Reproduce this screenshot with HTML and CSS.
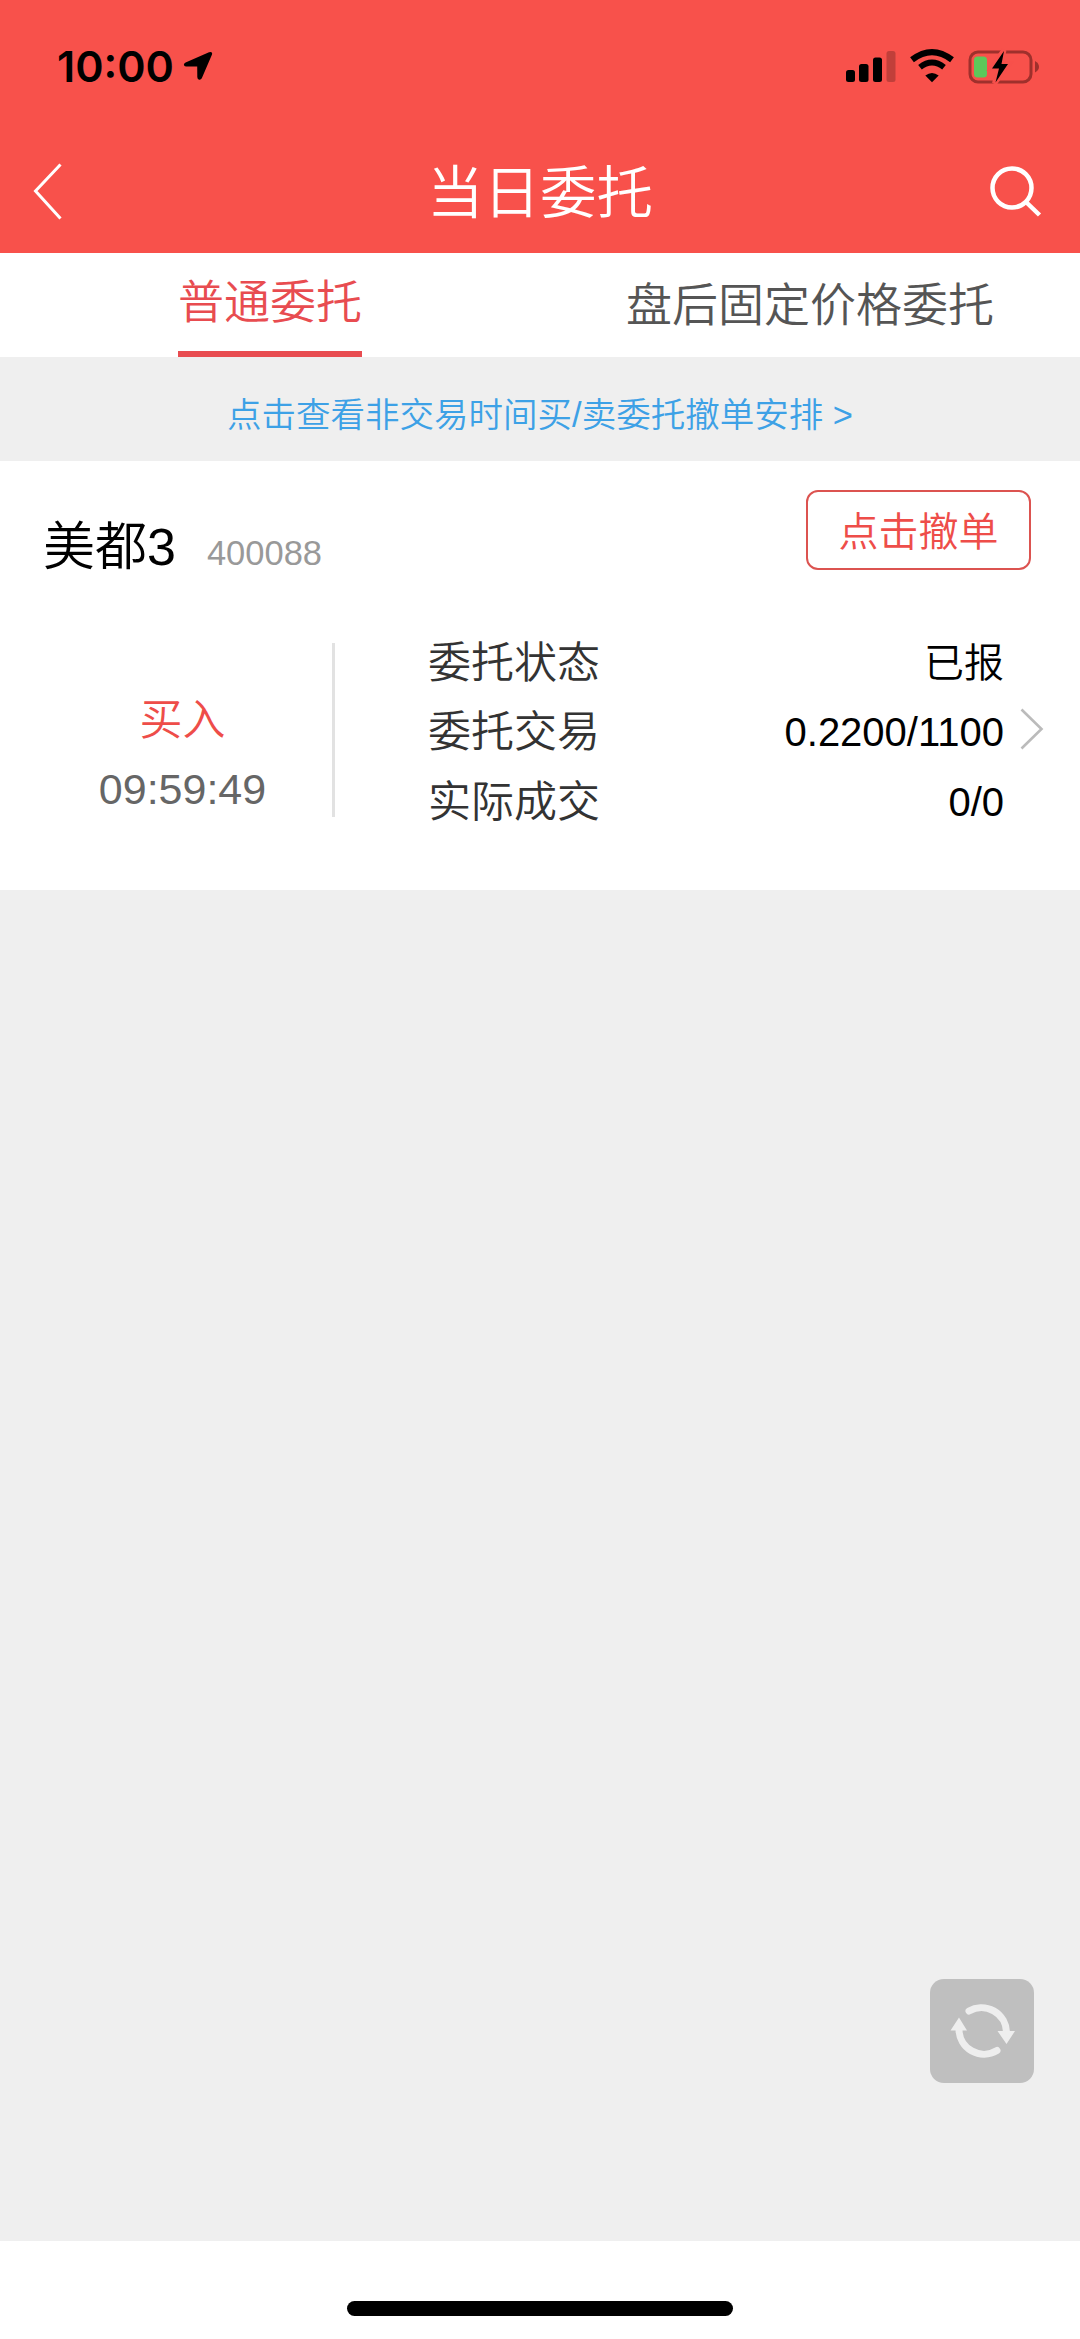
FILE: index.html
```html
<!DOCTYPE html>
<html lang="zh-CN">
<head>
<meta charset="utf-8">
<title>当日委托</title>
<link rel="stylesheet" href="styles.css">
</head>
<body>
<div class="screen">
  <header class="header">
    <div class="status">
      <span class="clock">10:00</span>
      <svg class="location" width="30" height="30" viewBox="0 0 30 30"><path d="M26 1.300 Q29.800 -.2 29 3.600 L18.800 27.300 Q18 29 16 28.700 Q14.300 28.400 14.300 26 L14.200 15.600 L3 15.500 Q1 15.400 .9 13.700 Q.8 12.300 2.600 11.400Z"/></svg>
      <svg class="signals" width="194" height="36" viewBox="0 0 194 36">
        <rect x="0" y="22" width="9" height="12" rx="2.5"/>
        <rect x="13" y="16" width="9.5" height="18" rx="2.5"/>
        <rect x="27" y="9.500" width="9" height="24.500" rx="2.500"/>
        <rect x="40.500" y="3" width="9" height="31" rx="2.500" opacity=".22"/>
        <g fill="none" stroke="#000">
          <path d="M66 11.800 Q86 -3.500 106 11.800" stroke-width="6.200"/>
          <path d="M74 19.300 Q86 9.800 98 19.300" stroke-width="5.800"/>
        </g>
        <path d="M86 34.300 L79.300 27.500 Q86 22.500 92.700 27.500Z"/>
        <rect x="124" y="4" width="61" height="30" rx="8" fill="none" stroke="#9f302c" stroke-width="3"/>
        <path d="M189 13 Q193 15 193 19 Q193 22 189 24.500Z" fill="#9f302c"/>
        <rect x="128" y="8.500" width="13" height="21" rx="3.500" fill="#5dc85a"/>
        <path d="M158 2 L145 20.500 L152.500 20.500 L148.500 35.500 L163 16 L155 16Z" stroke="#f7504b" stroke-width="5"/>
        <path d="M158 3 L146 20.500 L153 20.500 L149.500 34.500 L162 16 L155.500 16Z"/>
      </svg>
    </div>
    <nav class="nav">
      <svg class="back" width="30" height="58" viewBox="0 0 30 58"><path d="M28.500 1.500 L3.500 28 L28.500 55.500"/></svg>
      <h1 class="title">当日委托</h1>
      <svg class="search" width="52" height="52" viewBox="0 0 52 52"><circle cx="22" cy="22" r="19.500"/><path d="M36 36 L49.500 49"/></svg>
    </nav>
  </header>
  <div class="tabs">
    <div class="tab"><span class="tab-label tab-active">普通委托</span></div>
    <div class="tab"><span class="tab-label">盘后固定价格委托</span></div>
  </div>
  <div class="notice">点击查看非交易时间买/卖委托撤单安排 &gt;</div>
  <section class="card">
    <div class="card-head">
      <div class="stock"><span class="name">美都3</span><span class="code">400088</span></div>
      <button class="cancel">点击撤单</button>
    </div>
    <div class="card-body">
      <div class="side"><span class="buy">买入</span><span class="time">09:59:49</span></div>
      <dl class="details">
        <dt>委托状态</dt><dd>已报</dd>
        <dt>委托交易</dt><dd>0.2200/1100</dd>
        <dt>实际成交</dt><dd>0/0</dd>
      </dl>
      <svg class="more" width="24" height="42" viewBox="0 0 24 42"><path d="M1.500 1.500 L21.500 21 L1.500 40.500"/></svg>
    </div>
  </section>
  <main class="empty">
    <button class="refresh">
      <svg width="104" height="104" viewBox="0 0 104 104">
        <g fill="none" stroke="#eee" stroke-width="7" stroke-linecap="round">
          <path d="M39 32 A25 25 0 0 1 76.500 53"/>
          <path d="M67 71.500 A25 25 0 0 1 29 50"/>
        </g>
        <path d="M67.500 52 L85 52 L76.500 65Z M20.500 51.500 L37 51.500 L29 38.500Z" fill="#eee"/>
      </svg>
    </button>
  </main>
  <footer class="footer"><div class="home-bar"></div></footer>
</div>
</body>
</html>
```
FILE: styles.css
```css
* { box-sizing: border-box; }

body {
  margin: 0;
  background: #fff;
  font-family: "Liberation Sans", "Noto Sans CJK SC", sans-serif;
  font-weight: 350;
}

svg { display: block; flex: none; }

.screen {
  width: 1080px;
  height: 2339px;
  display: flex;
  flex-direction: column;
}

.header { height: 253px; background: #f8514b; }

.status {
  height: 132px;
  display: flex;
  align-items: flex-start;
  padding: 40px 40px 0 57px;
}

.clock {
  font: 600 43px/52px Inter, sans-serif;
  width: 126px;
  white-space: nowrap;
}

.location { margin-top: 11px; }
.signals { margin: 8px 0 0 auto; }

.nav {
  height: 119px;
  display: flex;
  align-items: center;
  justify-content: space-between;
  padding: 0 38px 0 32px;
}

.back { fill: none; stroke: #fff; stroke-width: 3; margin-right: 28px; }

.title {
  margin: 0;
  padding-top: 4px;
  color: #fff;
  font-size: 56.500px;
  font-weight: 350;
  line-height: 64px;
}

.search { fill: none; stroke: #fff; stroke-width: 4.5; }

.tabs { height: 104px; display: grid; grid-template-columns: 1fr 1fr; }
.tab { display: flex; justify-content: center; }
.tab-label { color: #555; font-size: 46px; line-height: 104px; }
.tab-active { color: #e84c50; line-height: 98px; border-bottom: 6px solid #e84c50; }

.notice {
  height: 104px;
  padding-top: 12px;
  background: #efefef;
  color: #3da1e6;
  font-size: 34.500px;
  line-height: 92px;
  text-align: center;
}

.card { height: 429px; background: #fff; }

.card-head {
  height: 168px;
  display: flex;
  justify-content: space-between;
  align-items: flex-start;
  padding: 29px 49px 0 43px;
}

.stock { margin-top: 27px; display: flex; align-items: baseline; }
.name { font-size: 52px; line-height: 60px; }
.code { margin-left: 31px; color: #999; font-size: 34.500px; }

.cancel {
  width: 225px;
  height: 80px;
  padding: 0 0 2px;
  border: 2.500px solid #dc5350;
  border-radius: 12px;
  background: none;
  color: #ee4d49;
  font: inherit;
  font-size: 40px;
}

.card-body { display: flex; }

.side {
  width: 302px;
  height: 174px;
  margin: 14px 0 0 33px;
  padding: 43px 0 0;
  border-right: 3px solid #e2e2e2;
  display: flex;
  flex-direction: column;
  align-items: center;
  font-size: 43px;
  line-height: 69px;
}

.buy { color: #ee4d49; }
.time { color: #666; }

.details {
  width: 576px;
  margin: 0 0 0 93px;
  display: grid;
  grid-template-columns: auto 1fr;
  line-height: 69.300px;
}

.details dt { color: #333; font-size: 43px; }
.details dd { margin: 0; text-align: right; font-size: 40px; color: #000; }

.more { margin: 79px 0 0 16px; fill: none; stroke: #bbb; stroke-width: 2.6; }

.empty {
  flex: 1;
  background: #efefef;
  display: flex;
  justify-content: flex-end;
  align-items: flex-end;
  padding: 0 46px 158px 0;
}

.refresh {
  width: 104px;
  height: 104px;
  padding: 0;
  border: 0;
  border-radius: 14px;
  background: #bfbfbf;
}

.footer { height: 98px; padding-top: 60px; }

.home-bar {
  width: 386px;
  height: 15px;
  margin: 0 auto;
  border-radius: 8px;
  background: #000;
}
```
